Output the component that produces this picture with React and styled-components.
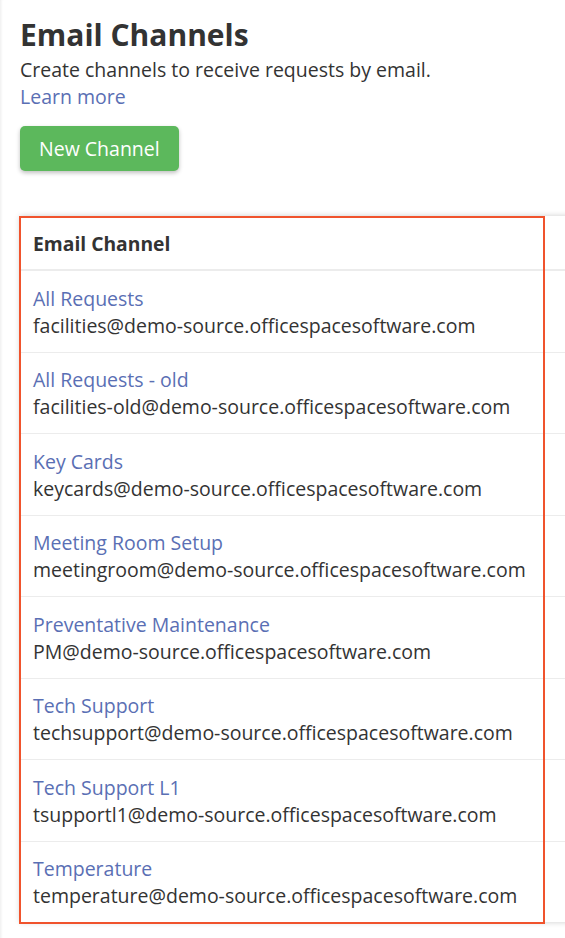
import React from 'react';
import styled, { createGlobalStyle } from 'styled-components';

const GlobalStyle = createGlobalStyle`
  body {
    margin: 0;
    background: #ffffff;
    font-family: "Open Sans", "Liberation Sans", sans-serif;
    color: #333333;
    overflow: hidden;
  }
`;

const Page = styled.div`
  position: relative;
  padding: 13px 0 40px 20px;
  min-height: 938px;
  box-sizing: border-box;
  box-shadow: inset 3px 0 3px -2px rgba(0, 0, 0, 0.08);
`;

const Title = styled.h1`
  margin: 0;
  font-size: 30px;
  line-height: 43px;
  font-weight: 700;
  color: #333333;
`;

const Subtitle = styled.p`
  margin: 0;
  font-size: 19.5px;
  line-height: 27px;
`;

const Link = styled.a`
  color: #5a6fb4;
  text-decoration: none;
  font-size: 19.5px;
  line-height: 27px;
  display: block;
`;

const Button = styled.button`
  margin-top: 16px;
  height: 45px;
  padding: 0 19px;
  border: none;
  border-radius: 5px;
  background: #5cb85c;
  color: #ffffff;
  font-family: inherit;
  font-size: 19.5px;
  box-shadow: 0 2px 4px rgba(0, 0, 0, 0.25);
  cursor: pointer;
`;

const CardWrap = styled.div`
  position: relative;
  margin-top: 45px;
`;

const Card = styled.div`
  width: 600px;
  background: #ffffff;
  box-shadow: 0 0 6px rgba(0, 0, 0, 0.2);
`;

const Header = styled.div`
  padding: 15px 13px 12px;
  font-size: 19.3px;
  line-height: 26px;
  font-weight: 700;
  border-bottom: 2px solid #ececec;
`;

const Row = styled.div`
  padding: 13.5px 13px 13px;
  border-bottom: 1px solid #ececec;

  &:last-child {
    border-bottom: none;
  }
`;

const Email = styled.div`
  font-size: 19.5px;
  line-height: 27px;
  color: #333333;
`;

const Highlight = styled.div`
  position: absolute;
  left: -1px;
  top: 0;
  width: 526px;
  bottom: -2px;
  box-sizing: border-box;
  border: 2px solid #f0532d;
  pointer-events: none;
`;

const channels = [
  { name: 'All Requests', email: 'facilities@demo-source.officespacesoftware.com' },
  { name: 'All Requests - old', email: 'facilities-old@demo-source.officespacesoftware.com' },
  { name: 'Key Cards', email: 'keycards@demo-source.officespacesoftware.com' },
  { name: 'Meeting Room Setup', email: 'meetingroom@demo-source.officespacesoftware.com' },
  { name: 'Preventative Maintenance', email: 'PM@demo-source.officespacesoftware.com' },
  { name: 'Tech Support', email: 'techsupport@demo-source.officespacesoftware.com' },
  { name: 'Tech Support L1', email: 'tsupportl1@demo-source.officespacesoftware.com' },
  { name: 'Temperature', email: 'temperature@demo-source.officespacesoftware.com' },
];

export default function App() {
  return (
    <>
      <GlobalStyle />
      <Page>
        <Title>Email Channels</Title>
        <Subtitle>Create channels to receive requests by email.</Subtitle>
        <Link href="#">Learn more</Link>
        <Button>New Channel</Button>

        <CardWrap>
          <Card>
            <Header>Email Channel</Header>
            {channels.map((c) => (
              <Row key={c.email}>
                <Link href="#">{c.name}</Link>
                <Email>{c.email}</Email>
              </Row>
            ))}
          </Card>
          <Highlight />
        </CardWrap>
      </Page>
    </>
  );
}
